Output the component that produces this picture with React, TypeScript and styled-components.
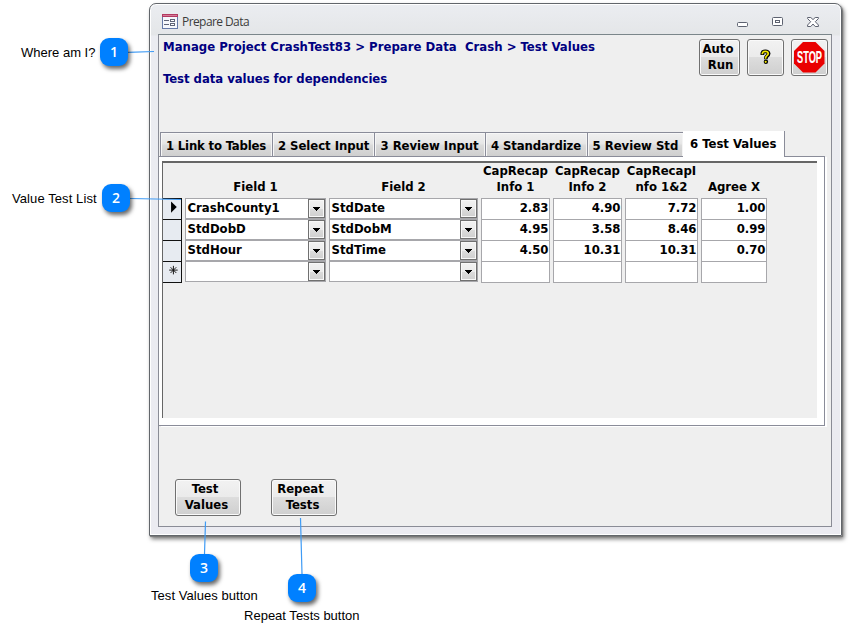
import React from "react";
import styled, { createGlobalStyle } from "styled-components";

const Global = createGlobalStyle`
  * { box-sizing: border-box; }
  body { margin: 0; background: #fff; }
`;

const formFont = `font-family: "DejaVu Sans Condensed", "DejaVu Sans", sans-serif; font-stretch: condensed; font-weight: 700; font-size: 13px; line-height: 16px;`;

const Page = styled.main`
  position: relative;
  width: 850px;
  height: 639px;
  padding: 3px 0 0 149px;
  overflow: hidden;
  background: #fff;
`;

const Window = styled.section`
  display: flex;
  flex-direction: column;
  width: 693px;
  height: 533px;
  padding: 0 8px 8px 7px;
  border: 1px solid #62666b;
  border-radius: 7px 7px 0 0;
  background: linear-gradient(#ebedf1 0, #e4e6e8 31px, #ebecf1 32px, #ebebf1 100%);
  box-shadow: inset 0 0 0 1px #fff, 1px 1px 1px #777, 2px 3px 4px rgba(0, 0, 0, 0.55);
`;

const TitleBar = styled.header`
  display: flex;
  align-items: center;
  flex: 0 0 30px;
  padding: 5px 14px 0 5px;
`;

const Title = styled.h1`
  margin: 0 auto 0 4px;
  font: 400 12px/16px "Open Sans", sans-serif;
  letter-spacing: -0.58px;
  color: #3c3c3c;
`;

const Controls = styled.div`
  display: flex;
  align-items: center;
  gap: 24px;
`;

const Client = styled.div`
  display: flex;
  flex-direction: column;
  flex: 1;
  width: 674px;
  margin-left: 1px;
  border: 1px solid #8a8c96;
  border-top-color: #7b868a;
  background: #efefef;
`;

const Heading = styled.div`
  display: flex;
  justify-content: space-between;
  flex: 0 0 96px;
  padding: 4px 3px 0 4px;
`;

const Crumbs = styled.div`
  display: flex;
  flex-direction: column;
  gap: 16px;
  ${formFont}
  color: #000080;
  white-space: pre;
`;

const Line = styled.span<{ $track?: number; $shift?: number }>`
  display: block;
  white-space: pre;
  letter-spacing: ${(p) => p.$track ?? 0}px;
  margin-left: ${(p) => p.$shift ?? 0}px;
`;

const Tools = styled.div`
  display: flex;
  gap: 7px;
`;

const Button = styled.button<{ $w: number }>`
  display: flex;
  flex-direction: column;
  align-items: center;
  justify-content: center;
  width: ${(p) => p.$w}px;
  height: 37px;
  padding: 0 0 1px;
  border: 1px solid #707070;
  border-radius: 3px;
  background: linear-gradient(#f2f2f2 0, #ebebeb 48%, #dddddd 49%, #cfcfcf 100%);
  box-shadow: inset 0 0 0 1px #fafafa;
  ${formFont}
  color: #000;
`;

const Tabs = styled.nav`
  display: flex;
  align-items: flex-end;
  height: 25px;
  padding-left: 1px;
`;

const Tab = styled.div<{ $w: number; $active?: boolean; $pad: number }>`
  position: relative;
  z-index: ${(p) => (p.$active ? 2 : 0)};
  width: ${(p) => p.$w}px;
  height: ${(p) => (p.$active ? 26 : 24)}px;
  margin: 0 ${(p) => (p.$active ? 0 : -1)}px ${(p) => (p.$active ? -1 : 0)}px 0;
  padding: 5px 0 0 ${(p) => p.$pad}px;
  border: 1px solid #8a8c99;
  border-width: ${(p) => (p.$active ? "0 1px 0 0" : "1px 1px 0 1px")};
  background: ${(p) => (p.$active ? "#fff" : "linear-gradient(#f0f0f0, #e7e7e7 45%, #dadada 55%, #cfcfcf)")};
  box-shadow: ${(p) => (p.$active ? "none" : "inset 1px 1px 0 #f7f7f7, inset -1px 0 0 #f4f4f4")};
  ${formFont}
  white-space: nowrap;
`;

const Panel = styled.div`
  width: 666px;
  height: 270px;
  padding: 4px 7px 7px 3px;
  border: 1px solid #8a8c99;
  border-left: 0;
  background: #fff;
  box-shadow: 2px 1px 0 #fff;
`;

const Sheet = styled.div`
  height: 257px;
  border-top: 2px solid #666;
  border-left: 1px solid #666;
  background: #efefef;
`;

const columns = "19px 141px 149px 69px 69px 73px 66px";

const HeaderRow = styled.div`
  display: grid;
  grid-template-columns: ${columns};
  column-gap: 3px;
  height: 35px;
  align-items: end;
  padding-bottom: 3px;
`;

const ColumnTitle = styled.div`
  display: flex;
  flex-direction: column;
  align-items: center;
  ${formFont}
`;

const Row = styled.div`
  display: grid;
  grid-template-columns: ${columns};
  column-gap: 3px;
  height: 21px;
`;

const Selector = styled.div`
  display: flex;
  align-items: center;
  justify-content: center;
  height: 22px;
  border: solid #111;
  border-width: 1px 1px 1px 0;
  background: #e7ebf1;
`;

const Combo = styled.div`
  display: flex;
  justify-content: space-between;
  height: 21px;
  padding-left: 1.5px;
  border: 1px solid #a7a7ab;
  background: #fff;
  ${formFont}
  line-height: 17px;
`;

const DropButton = styled.span`
  display: flex;
  align-items: center;
  justify-content: center;
  width: 17px;
  height: 19px;
  border: 1px solid #707070;
  background: linear-gradient(#f2f2f2, #ebebeb 50%, #dcdcdc 51%, #cfcfcf);
  box-shadow: inset 0 0 0 1px #f8f8f8;
`;

const NumberCell = styled.div`
  height: 22px;
  padding-right: 0.5px;
  border: 1px solid #a7a7ab;
  background: #fff;
  text-align: right;
  ${formFont}
  line-height: 17px;
`;

const Footer = styled.footer`
  display: flex;
  gap: 30px;
  padding: 53px 0 0 16px;
`;

const Badge = styled.div<{ $x: number; $y: number }>`
  position: absolute;
  left: ${(p) => p.$x}px;
  top: ${(p) => p.$y}px;
  width: 28px;
  height: 28px;
  border-radius: 9px;
  background: #0080ff;
  box-shadow: 2px 3px 4px rgba(0, 0, 0, 0.6);
  color: #fff;
  font: 600 14px/28px "Open Sans", sans-serif;
  text-align: center;
`;

const Label = styled.div<{ $x: number; $y: number; $track: number }>`
  position: absolute;
  left: ${(p) => p.$x}px;
  top: ${(p) => p.$y}px;
  font: 400 13px/16px "Liberation Sans", Arial, sans-serif;
  letter-spacing: ${(p) => p.$track}px;
  color: #000;
  white-space: nowrap;
`;

const Leaders = styled.svg`
  position: absolute;
  inset: 0;
  pointer-events: none;
`;

const FormIcon = () => (
  <svg width="16" height="15" viewBox="0 0 16 15" shapeRendering="crispEdges">
    <rect x="0.5" y="0.5" width="15" height="14" fill="#f5f7fc" stroke="#6679a8" />
    <rect width="16" height="3" fill="#b33a62" />
    <rect x="1" y="1" width="14" height="1" fill="#d57b98" />
    <path d="M2 6.5h5M2 10.5h5" stroke="#5f6478" />
    <rect x="8.5" y="5.5" width="4" height="2" fill="#fff" stroke="#5f6478" />
    <rect x="8.5" y="9.5" width="4" height="2" fill="#fff" stroke="#5f6478" />
  </svg>
);

const HelpIcon = () => (
  <svg width="12" height="16" viewBox="0 0 12 16">
    <path d="M2.4 5.9V4.1Q2.7 2.4 5.4 2.4T8.6 4.6Q8.6 6 6.9 7.1Q5.8 7.9 5.8 10.2" fill="none" stroke="#000" strokeWidth="3.8" />
    <circle cx="5.9" cy="12.8" r="2.2" />
    <path d="M2.4 5.2V4.1Q2.7 2.4 5.4 2.4T8.3 4.6Q8.3 5.8 6.7 6.9Q5.5 7.8 5.5 9.8" fill="none" stroke="#f2e600" strokeWidth="1.7" />
    <circle cx="5.7" cy="12.8" r="1.1" fill="#f2e600" />
  </svg>
);

const StopIcon = () => (
  <svg width="31" height="31" viewBox="0 0 31 31" overflow="visible">
    <path d="M9 0H21.5L30.5 9V21.5L21.5 30.5H9L0 21.5V9Z" fill="#ea0000" />
    <g transform="translate(3 21) scale(.56 1)">
      <text fill="#fff" fontFamily="Liberation Sans, sans-serif" fontSize="16.5" stroke="#fff" strokeWidth=".2">STOP</text>
    </g>
  </svg>
);

const MinimizeIcon = () => (
  <svg width="11" height="14" viewBox="0 0 11 14">
    <rect x="0.5" y="7.5" width="10" height="4" rx="1" fill="#fff" stroke="#5d6270" />
  </svg>
);

const RestoreIcon = () => (
  <svg width="11" height="9" viewBox="0 0 11 9">
    <rect x="0.5" y="0.5" width="10" height="8" rx="1" fill="#fff" stroke="#5d6270" />
    <rect x="3.5" y="3.5" width="4" height="2" fill="#fff" stroke="#5d6270" />
  </svg>
);

const CloseIcon = () => (
  <svg width="12" height="10" viewBox="0 0 12 10">
    <path d="M.6.5H3.8L6 2.6 8.2.5h3.2V1.6L8.3 4.7 11.4 8V9.5H8.2L6 7 3.8 9.5H.6V8L3.7 4.7.6 1.6Z" fill="#fff" stroke="#5d6270" />
  </svg>
);

const DropArrow = () => (
  <svg width="7" height="4" viewBox="0 0 7 4" shapeRendering="crispEdges">
    <path d="M0 0H7L3.5 4Z" />
  </svg>
);

const CurrentMark = () => (
  <svg width="19" height="20" viewBox="0 0 19 20">
    <path d="M8.5 2L14.5 8 8.5 14Z" />
  </svg>
);

const NewMark = () => (
  <svg width="19" height="20" viewBox="0 0 19 20">
    <path d="M11 3.5v9M6.5 8h9M8 5l6 6M14 5l-6 6" stroke="#111" fill="none" />
  </svg>
);

const tabs = [
  { text: "1 Link to Tables", w: 113, track: -0.18, pad: 5 },
  { text: "2 Select Input", w: 103, track: -0.05, pad: 5 },
  { text: "3 Review Input", w: 112, track: -0.03, pad: 5.5 },
  { text: "4 Standardize", w: 103, track: -0.12, pad: 5 },
  { text: "5 Review Std", w: 97, track: -0.02, pad: 4.5 },
  { text: "6 Test Values", w: 102, track: 0, pad: 7, active: true },
];

const titles = [["Field 1"], ["Field 2"], ["CapRecap", "Info 1"], ["CapRecap", "Info 2"], ["CapRecapI", "nfo 1&2"], ["Agree X"]];

const rows = [
  { f1: "CrashCounty1", f2: "StdDate", n: ["2.83", "4.90", "7.72", "1.00"] },
  { f1: "StdDobD", f2: "StdDobM", n: ["4.95", "3.58", "8.46", "0.99"] },
  { f1: "StdHour", f2: "StdTime", n: ["4.50", "10.31", "10.31", "0.70"] },
  { f1: "", f2: "", n: ["", "", "", ""] },
];

const ComboBox = ({ text }: { text: string }) => (
  <Combo>
    <Line>{text}</Line>
    <DropButton><DropArrow /></DropButton>
  </Combo>
);

export default function App() {
  return (
    <Page>
      <Global />
      <Window>
        <TitleBar>
          <FormIcon />
          <Title>Prepare Data</Title>
          <Controls><MinimizeIcon /><RestoreIcon /><CloseIcon /></Controls>
        </TitleBar>
        <Client>
          <Heading>
            <Crumbs>
              <Line $track={0.02}>{"Manage Project CrashTest83 > Prepare Data  Crash > Test Values"}</Line>
              <Line $track={-0.05}>Test data values for dependencies</Line>
            </Crumbs>
            <Tools>
              <Button $w={41}><Line $shift={-3}>Auto</Line><Line $shift={2}>Run</Line></Button>
              <Button $w={37}><HelpIcon /></Button>
              <Button $w={37}><StopIcon /></Button>
            </Tools>
          </Heading>
          <Tabs>
            {tabs.map((t) => (
              <Tab key={t.text} $w={t.w} $active={t.active} $pad={t.pad}><Line $track={t.track}>{t.text}</Line></Tab>
            ))}
          </Tabs>
          <Panel>
            <Sheet>
              <HeaderRow>
                <span />
                {titles.map((t, i) => (
                  <ColumnTitle key={i}>{t.map((s) => <Line key={s}>{s}</Line>)}</ColumnTitle>
                ))}
              </HeaderRow>
              {rows.map((r, i) => (
                <Row key={i}>
                  <Selector>{i === 0 && <CurrentMark />}{i === 3 && <NewMark />}</Selector>
                  <ComboBox text={r.f1} />
                  <ComboBox text={r.f2} />
                  {r.n.map((v, j) => <NumberCell key={j}>{v}</NumberCell>)}
                </Row>
              ))}
            </Sheet>
          </Panel>
          <Footer>
            <Button $w={66}><Line $shift={-6}>Test</Line><Line $shift={-3}>Values</Line></Button>
            <Button $w={66}><Line $shift={-7}>Repeat</Line><Line $shift={-3}>Tests</Line></Button>
          </Footer>
        </Client>
      </Window>
      <Leaders width="850" height="639" viewBox="0 0 850 639" fill="none" stroke="#3f9bf5" strokeWidth="1.2">
        <path d="M128 52.3L154 51.5M130 198.5L181 199.5M204.5 554L205.5 521.5M302 574L300.5 518" />
      </Leaders>
      <Badge $x={100} $y={38}>1</Badge>
      <Badge $x={102} $y={184}>2</Badge>
      <Badge $x={190} $y={554}>3</Badge>
      <Badge $x={288} $y={574}>4</Badge>
      <Label $x={21} $y={45} $track={0}>Where am I?</Label>
      <Label $x={12} $y={191} $track={0.09}>Value Test List</Label>
      <Label $x={151} $y={588} $track={0.05}>Test Values button</Label>
      <Label $x={244} $y={608} $track={0.01}>Repeat Tests button</Label>
    </Page>
  );
}
